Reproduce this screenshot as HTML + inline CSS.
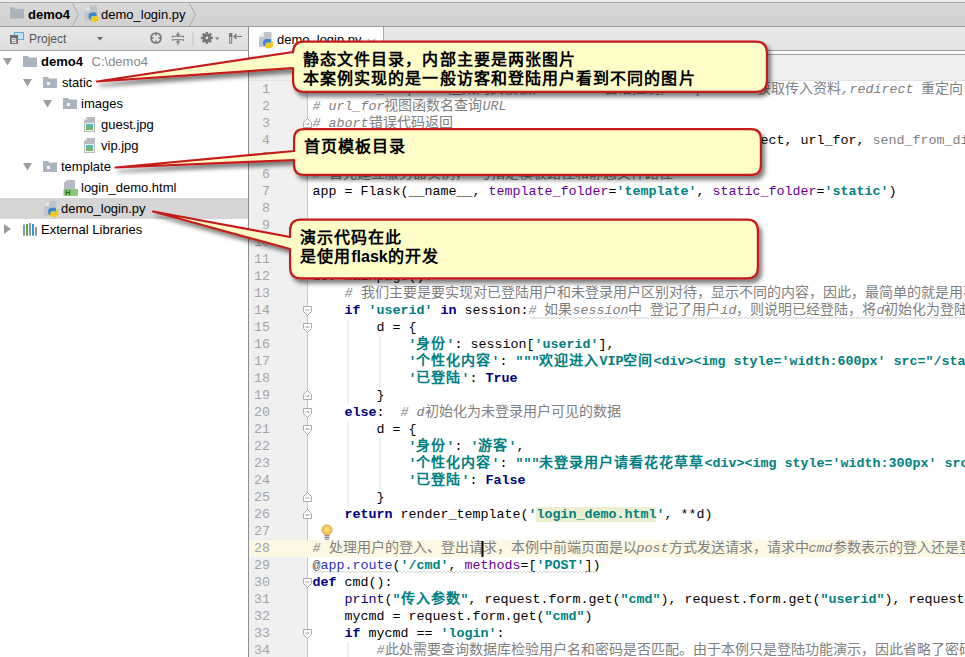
<!DOCTYPE html>
<html lang="zh-CN">
<head>
<meta charset="utf-8">
<style>
*{margin:0;padding:0;box-sizing:border-box}
html,body{width:965px;height:657px;overflow:hidden;background:#fff}
body{position:relative;font-family:"Liberation Sans",sans-serif;font-size:13px;color:#000}
.abs{position:absolute}
#topstrip{left:0;top:0;width:965px;height:3px;background:#ececec;border-bottom:1px solid #a9a9a9}
#nav{left:0;top:3px;width:965px;height:24px;background:linear-gradient(#d8d8d8,#d1d1d1);border-bottom:1px solid #9d9d9d}
#ltb{left:0;top:27px;width:248px;height:24px;background:linear-gradient(#e8e8e8,#dedede);border-bottom:1px solid #a8a8a8}
#tree{left:0;top:51px;width:248px;height:606px;background:#fff}
#divider{left:248px;top:27px;width:1px;height:630px;background:#8e8e8e}
#tabbar{left:249px;top:27px;width:716px;height:24px;background:linear-gradient(#e9e9e9,#e3e3e3);border-bottom:1px solid #a0a0a0}
#tab{left:249px;top:27px;width:135px;height:28px;background:#fff;border-right:1px solid #a8a8a8}
#tabline{left:249px;top:54px;width:716px;height:1px;background:#a0a0a0}
#strip{left:249px;top:55px;width:716px;height:26px;background:#efefef;border-bottom:1px solid #e2e2e2}
#gutter{left:249px;top:81px;width:58px;height:576px;background:#f0f0f0}
#gsep{left:307px;top:81px;width:1px;height:576px;background:#c9c9c9}
#code{left:308px;top:81px;width:657px;height:576px;background:#fff}
.row{position:absolute;left:0;height:21px;line-height:21px;white-space:nowrap}
.sel{background:#d5d5d5}
.ln{position:absolute;left:249px;width:21px;text-align:right;font-family:"Liberation Mono",monospace;font-size:13.33px;color:#a5a5a5;line-height:17px;height:17px}
.cl{position:absolute;left:312.5px;font-family:"Liberation Mono",monospace;font-size:13.333px;line-height:17px;height:17px;white-space:pre;color:#000}
.k{color:#000080;font-weight:bold}
.s{color:#008080;font-weight:bold}
.c{color:#808080;font-style:italic}
.p{color:#660099}
.bi{color:#000080}
.at{color:#555}
.g{color:#808080}
.d{color:#2d2db8}
.z{font-size:14px;font-style:normal}
.zb{font-size:14px;letter-spacing:1px}
.hl{background:#ecefd0}
.callout{position:absolute}
.ct{position:absolute;font-family:"Liberation Sans",sans-serif;font-weight:bold;font-size:16px;letter-spacing:1.07px;line-height:19px;color:#000;white-space:nowrap}
</style>
</head>
<body>
<div id="topstrip" class="abs"></div>
<div id="nav" class="abs"></div>
<div id="ltb" class="abs"></div>
<div id="tree" class="abs"></div>
<div id="divider" class="abs"></div>
<div id="tabbar" class="abs"></div>
<div id="tabline" class="abs"></div>
<div id="tab" class="abs"></div>
<div id="strip" class="abs"></div>
<div id="gutter" class="abs"></div>
<div id="gsep" class="abs"></div>
<div id="code" class="abs"></div>
<div class="row sel abs" style="top:198px;width:248px"></div>

<!-- NAV -->
<svg class="abs" style="left:0;top:0" width="965" height="657" viewBox="0 0 965 657">
<defs>
<g id="pyicon">
 <path d="M0,5 L5,0 L12.5,0 L12.5,15 L0,15 Z" fill="#bfc5cb"/>
 <path d="M0,5 L5,5 L5,0 Z" fill="#e6e8ea"/>
 <path d="M4,11 Q4,7 7.5,7 L11.5,7 Q12,7 12,8 L12,10.5 L8,10.5 Q7,10.5 7,11.5 L7,14.2 Q4,14.2 4,11 Z" fill="#3b88d0"/>
 <path d="M6.3,12.2 Q6.3,11.3 7.3,11.3 L11.3,11.3 Q12.3,11.3 12.3,10.3 L12.3,8.2 Q14.3,8.5 14.3,12.3 Q14.3,16.3 10.3,16.3 L7.3,16.3 Q6.3,16.3 6.3,15.3 Z" fill="#f2c81c"/>
</g>
<g id="folder">
 <path d="M0,0 L5,0 L6,1.5 L14,1.5 L14,10.5 L0,10.5 Z" fill="#a9b4be"/>
</g>
<g id="imgicon">
 <path d="M0,3 L3,0 L11,0 L11,15 L0,15 Z" fill="#b8bcc2"/>
 <path d="M0.5,3 L3,3 L3,0.5 Z" fill="#e4e4e4"/>
 <rect x="1" y="6" width="9" height="8" fill="#eef5f0"/>
 <rect x="2" y="7" width="7" height="3.5" fill="#4cb8c4"/>
 <path d="M2,10 L5,8.5 L9,10.5 L9,13 L2,13 Z" fill="#7ab468"/>
</g>
</defs>
<!-- nav folder -->
<rect x="10" y="9" width="14" height="9.5" fill="#aab4bd"/><rect x="10" y="7.5" width="5" height="2" fill="#aab4bd"/>
<path d="M72.5,3.5 L78.5,14.5 L72.5,26" fill="none" stroke="#a8a8a8" stroke-width="1"/>
<use href="#pyicon" x="84.5" y="5.5"/>
<path d="M189.5,3.5 L195.5,14.5 L189.5,26" fill="none" stroke="#a8a8a8" stroke-width="1"/>
<!-- toolbar icons -->
<rect x="10.5" y="35.5" width="7" height="8" fill="#6f6f6f"/>
<rect x="14.5" y="32.5" width="9" height="7" fill="#c5e2f3" stroke="#6aa7cf" stroke-width="1"/>
<rect x="10" y="35" width="8" height="9" fill="#707070"/>
<text x="11.6" y="42.6" font-family="Liberation Sans" font-size="7" font-weight="bold" fill="#eee">B</text>
<path d="M97,37 L103,37 L100,40.5 Z" fill="#6a6a6a"/>
<circle cx="156" cy="38" r="5" fill="none" stroke="#777" stroke-width="1.7"/>
<path d="M156,33 V35.6 M156,40.4 V43 M151,38 H153.6 M158.4,38 H161" stroke="#777" stroke-width="1.7"/>
<path d="M172.5,37.6 V36.3 H183.5 V37.6 M172.5,41 V39.7 H183.5 V41" fill="none" stroke="#777" stroke-width="1.1"/>
<path d="M178,32 V34.5" stroke="#777" stroke-width="1.1"/><path d="M175.8,34 L180.2,34 L178,36.4 Z" fill="#777"/>
<path d="M178,42 V45" stroke="#777" stroke-width="1.1"/><path d="M175.8,42.5 L180.2,42.5 L178,40 Z" fill="#777"/>
<rect x="192.5" y="32" width="1" height="14" fill="#c4c4c4"/>
<g transform="translate(206.9,37.9)" fill="#777">
 <circle r="4.3"/>
 <rect x="-1.2" y="-6" width="2.4" height="12"/><rect x="-6" y="-1.2" width="12" height="2.4"/>
 <rect x="-1.2" y="-6" width="2.4" height="12" transform="rotate(45)"/><rect x="-1.2" y="-6" width="2.4" height="12" transform="rotate(-45)"/>
 <circle r="1.3" fill="#e6e6e6"/>
</g>
<path d="M215,37.5 L219.5,37.5 L217.25,40 Z" fill="#777"/>
<rect x="229.7" y="33.5" width="2" height="9.6" fill="#eee" stroke="#777" stroke-width="1"/><rect x="229.2" y="33" width="3" height="4" fill="#777"/>
<path d="M234,36.5 H242 M236.5,34 L234,36.5 L236.5,39" fill="none" stroke="#777" stroke-width="1.2"/>
<!-- tree icons -->
<path d="M3,58 L12,58 L7.5,65.5 Z" fill="#9c9c9c"/>
<rect x="23" y="57.5" width="14" height="9.5" fill="#a9b4be"/><rect x="23" y="56" width="5.5" height="2" fill="#a9b4be"/>
<path d="M23,79 L32,79 L27.5,86.5 Z" fill="#9c9c9c"/>
<rect x="43" y="78.5" width="14" height="9.5" fill="#a9b4be"/><rect x="43" y="77" width="5.5" height="2" fill="#a9b4be"/><rect x="47" y="82" width="3" height="3" fill="#f4f6f8"/>
<path d="M43,100 L52,100 L47.5,107.5 Z" fill="#9c9c9c"/>
<rect x="63" y="99.5" width="14" height="9.5" fill="#a9b4be"/><rect x="63" y="98" width="5.5" height="2" fill="#a9b4be"/><rect x="67" y="103" width="3" height="3" fill="#f4f6f8"/>
<use href="#imgicon" x="84" y="117"/>
<use href="#imgicon" x="84" y="138"/>
<path d="M23,163 L32,163 L27.5,170.5 Z" fill="#9c9c9c"/>
<rect x="43" y="162.5" width="14" height="9.5" fill="#a9b4be"/><rect x="43" y="161" width="5.5" height="2" fill="#a9b4be"/><rect x="47" y="166" width="3" height="3" fill="#f4f6f8"/>
<path d="M64,183 L67,180 L75,180 L75,189 L64,189 Z" fill="#b8bcc2"/>
<rect x="63.5" y="189" width="14.5" height="7" fill="#8fc57a"/>
<text x="65" y="195.3" font-family="Liberation Sans" font-size="7.5" font-weight="bold" fill="#1d6b1d">H</text>
<use href="#pyicon" x="44" y="200.7"/>
<path d="M4,224 L11,229 L4,234 Z" fill="#9c9c9c"/>
<rect x="23" y="224.5" width="2" height="11.2" fill="#8a98a4"/>
<rect x="26" y="224" width="2" height="11.7" fill="#62a33f"/>
<rect x="29" y="223" width="2" height="12.7" fill="#8a98a4"/>
<rect x="32" y="224" width="2" height="11.7" fill="#2f9bd6"/>
<rect x="35" y="227" width="2" height="8.7" fill="#8a98a4"/>
<!-- tab icon -->
<use href="#pyicon" x="259" y="32"/>
<path d="M368,39 L371.5,42.5 L375,39" fill="none" stroke="#b4b4b4" stroke-width="1.3"/>
</svg>
<div class="abs" style="left:28px;top:7px;font-weight:bold;font-size:13px;line-height:16px">demo4</div>
<div class="abs" style="left:101px;top:7px;font-size:13px;line-height:16px">demo_login.py</div>

<!-- LEFT TOOLBAR -->
<div class="abs" style="left:29px;top:31px;font-size:12px;line-height:16px;color:#555">Project</div>

<!-- TREE -->
<div class="abs" style="left:41px;top:54px;line-height:16px"><b>demo4</b> <span style="color:#888;margin-left:5px">C:\demo4</span></div>
<div class="abs" style="left:62px;top:75px;line-height:16px">static</div>
<div class="abs" style="left:81px;top:96px;line-height:16px">images</div>
<div class="abs" style="left:101px;top:117px;line-height:16px">guest.jpg</div>
<div class="abs" style="left:101px;top:138px;line-height:16px">vip.jpg</div>
<div class="abs" style="left:61px;top:159px;line-height:16px">template</div>
<div class="abs" style="left:81px;top:180px;line-height:16px">login_demo.html</div>
<div class="abs" style="left:61px;top:201px;line-height:16px">demo_login.py</div>
<div class="abs" style="left:41px;top:222px;line-height:16px">External Libraries</div>

<!-- TAB -->
<div class="abs" style="left:277px;top:32px;line-height:16px">demo_login.py</div>

<!-- GUTTER NUMBERS & CODE LINES inserted below -->
<div class="abs" style="left:249px;top:540px;width:716px;height:17px;background:#fcf8e4"></div>
<div class="ln" style="top:81px">1</div>
<div class="ln" style="top:98px">2</div>
<div class="ln" style="top:115px">3</div>
<div class="ln" style="top:132px">4</div>
<div class="ln" style="top:149px">5</div>
<div class="ln" style="top:166px">6</div>
<div class="ln" style="top:183px">7</div>
<div class="ln" style="top:200px">8</div>
<div class="ln" style="top:217px">9</div>
<div class="ln" style="top:234px">10</div>
<div class="ln" style="top:251px">11</div>
<div class="ln" style="top:268px">12</div>
<div class="ln" style="top:285px">13</div>
<div class="ln" style="top:302px">14</div>
<div class="ln" style="top:319px">15</div>
<div class="ln" style="top:336px">16</div>
<div class="ln" style="top:353px">17</div>
<div class="ln" style="top:370px">18</div>
<div class="ln" style="top:387px">19</div>
<div class="ln" style="top:404px">20</div>
<div class="ln" style="top:421px">21</div>
<div class="ln" style="top:438px">22</div>
<div class="ln" style="top:455px">23</div>
<div class="ln" style="top:472px">24</div>
<div class="ln" style="top:489px">25</div>
<div class="ln" style="top:506px">26</div>
<div class="ln" style="top:523px">27</div>
<div class="ln" style="top:540px">28</div>
<div class="ln" style="top:557px">29</div>
<div class="ln" style="top:574px">30</div>
<div class="ln" style="top:591px">31</div>
<div class="ln" style="top:608px">32</div>
<div class="ln" style="top:625px">33</div>
<div class="ln" style="top:642px">34</div>
<div class="cl" style="top:81px"><span class="c"># render_template<span class="z">渲染网页模板</span>, session<span class="z">会话控制</span>, request </span><span style="display:inline-block;width:17px"></span><span class="c"><span class="z">获取传入资料</span>,redirect <span class="z">重定向</span></span></div>
<div class="cl" style="top:98px"><span class="c"># url_for<span class="z">视图函数名查询</span>URL</span></div>
<div class="cl" style="top:115px"><span class="c"># abort<span class="z">错误代码返回</span></span></div>
<div class="cl" style="top:132px"><span class="k">from</span> flask <span class="k">import</span> Flask, render_template, session, redirect, url_for, <span class="g">send_from_directory, abort</span></div>
<div class="cl" style="top:149px"></div>
<div class="cl" style="top:166px"><span class="c"># <span class="z">首先建立服务器实例，</span> <span class="z">与指定模板路径和静态文件路径</span></span></div>
<div class="cl" style="top:183px">app = Flask(__name__, <span class="p">template_folder</span>=<span class="s">&#x27;template&#x27;</span>, <span class="p">static_folder</span>=<span class="s">&#x27;static&#x27;</span>)</div>
<div class="cl" style="top:200px"></div>
<div class="cl" style="top:217px"></div>
<div class="cl" style="top:234px"><span class="at">@</span><span class="d">app.route</span>(&#x27;/&#x27;)</div>
<div class="cl" style="top:251px"></div>
<div class="cl" style="top:268px"><span class="k">def</span> mainpage():</div>
<div class="cl" style="top:285px">    <span class="c"># <span class="z">我们主要是要实现对已登陆用户和未登录用户区别对待，显示不同的内容，因此，最简单的就是用不同的变量</span></span></div>
<div class="cl" style="top:302px">    <span class="k">if</span> <span class="s">&#x27;userid&#x27;</span> <span class="k">in</span> session:<span class="c"># <span class="z">如果</span>session<span class="z">中</span> <span class="z">登记了用户</span>id<span class="z">，则说明已经登陆，将</span>d<span class="z">初始化为登陆</span></span></div>
<div class="cl" style="top:319px">        d = {</div>
<div class="cl" style="top:336px">            <span class="s">&#x27;<span class="zb">身份</span>&#x27;</span>: session[<span class="s">&#x27;userid&#x27;</span>],</div>
<div class="cl" style="top:353px">            <span class="s">&#x27;<span class="zb">个性化内容</span>&#x27;</span>: <span class="s">&quot;&quot;&quot;<span class="zb">欢迎进入</span>VIP<span class="zb">空间</span>&lt;div&gt;&lt;img style=&#x27;width:600px&#x27; src=&quot;/static/images/vip.jpg&quot;&gt;&lt;/div&gt;&quot;&quot;&quot;</span></div>
<div class="cl" style="top:370px">            <span class="s">&#x27;<span class="zb">已登陆</span>&#x27;</span>: <span class="k">True</span></div>
<div class="cl" style="top:387px">        }</div>
<div class="cl" style="top:404px">    <span class="k">else</span>:  <span class="c"># d<span class="z">初始化为未登录用户可见的数据</span></span></div>
<div class="cl" style="top:421px">        d = {</div>
<div class="cl" style="top:438px">            <span class="s">&#x27;<span class="zb">身份</span>&#x27;</span>: <span class="s">&#x27;<span class="zb">游客</span>&#x27;</span>,</div>
<div class="cl" style="top:455px">            <span class="s">&#x27;<span class="zb">个性化内容</span>&#x27;</span>: <span class="s">&quot;&quot;&quot;<span class="zb">未登录用户请看花花草草</span>&lt;div&gt;&lt;img style=&#x27;width:300px&#x27; src=&quot;/static/images/guest.jpg&quot;&gt;&lt;/div&gt;&quot;&quot;&quot;</span></div>
<div class="cl" style="top:472px">            <span class="s">&#x27;<span class="zb">已登陆</span>&#x27;</span>: <span class="k">False</span></div>
<div class="cl" style="top:489px">        }</div>
<div class="cl" style="top:506px">    <span class="k">return</span> render_template(<span class="s">&#x27;</span><span class="s hl">login_demo.html</span><span class="s">&#x27;</span>, **d)</div>
<div class="cl" style="top:523px"></div>
<div class="cl" style="top:540px"><span class="c"># <span class="z">处理用户的登入、登出请求，本例中前端页面是以</span>post<span class="z">方式发送请求，请求中</span>cmd<span class="z">参数表示的登入还是登出</span></span></div>
<div class="cl" style="top:557px"><span class="at">@</span><span class="d">app.route</span>(<span class="s">&#x27;/cmd&#x27;</span>, <span class="p">methods</span>=[<span class="s">&#x27;POST&#x27;</span>])</div>
<div class="cl" style="top:574px"><span class="k">def</span> cmd():</div>
<div class="cl" style="top:591px">    <span class="bi">print</span>(<span class="s">&quot;<span class="zb">传入参数</span>&quot;</span>, request.form.get(<span class="s">&quot;cmd&quot;</span>), request.form.get(<span class="s">&quot;userid&quot;</span>), request.form.get(<span class="s">&quot;pwd&quot;</span>))</div>
<div class="cl" style="top:608px">    mycmd = request.form.get(<span class="s">&quot;cmd&quot;</span>)</div>
<div class="cl" style="top:625px">    <span class="k">if</span> mycmd == <span class="s">&#x27;login&#x27;</span>:</div>
<div class="cl" style="top:642px">        <span class="c">#<span class="z">此处需要查询数据库检验用户名和密码是否匹配。由于本例只是登陆功能演示，因此省略了密码检验</span></span></div>
<svg class="abs" style="left:0;top:0" width="965" height="657" viewBox="0 0 965 657"><path d="M307.5,118.5 L311.5,122.5 V127.5 H303.5 V122.5 Z" fill="#fff" stroke="#ababab" stroke-width="1"/><path d="M305.5,124 H309.5" stroke="#9a9a9a" stroke-width="1"/><path d="M303.5,306.5 H311.5 V311.5 L307.5,315.5 L303.5,311.5 Z" fill="#fff" stroke="#ababab" stroke-width="1"/><path d="M305.5,310 H309.5" stroke="#9a9a9a" stroke-width="1"/><path d="M303.5,323.5 H311.5 V328.5 L307.5,332.5 L303.5,328.5 Z" fill="#fff" stroke="#ababab" stroke-width="1"/><path d="M305.5,327 H309.5" stroke="#9a9a9a" stroke-width="1"/><path d="M307.5,390.5 L311.5,394.5 V399.5 H303.5 V394.5 Z" fill="#fff" stroke="#ababab" stroke-width="1"/><path d="M305.5,396 H309.5" stroke="#9a9a9a" stroke-width="1"/><path d="M303.5,408.5 H311.5 V413.5 L307.5,417.5 L303.5,413.5 Z" fill="#fff" stroke="#ababab" stroke-width="1"/><path d="M305.5,412 H309.5" stroke="#9a9a9a" stroke-width="1"/><path d="M303.5,425.5 H311.5 V430.5 L307.5,434.5 L303.5,430.5 Z" fill="#fff" stroke="#ababab" stroke-width="1"/><path d="M305.5,429 H309.5" stroke="#9a9a9a" stroke-width="1"/><path d="M307.5,492.5 L311.5,496.5 V501.5 H303.5 V496.5 Z" fill="#fff" stroke="#ababab" stroke-width="1"/><path d="M305.5,498 H309.5" stroke="#9a9a9a" stroke-width="1"/><path d="M307.5,509.5 L311.5,513.5 V518.5 H303.5 V513.5 Z" fill="#fff" stroke="#ababab" stroke-width="1"/><path d="M305.5,515 H309.5" stroke="#9a9a9a" stroke-width="1"/><path d="M303.5,578.5 H311.5 V583.5 L307.5,587.5 L303.5,583.5 Z" fill="#fff" stroke="#ababab" stroke-width="1"/><path d="M305.5,582 H309.5" stroke="#9a9a9a" stroke-width="1"/><path d="M303.5,629.5 H311.5 V634.5 L307.5,638.5 L303.5,634.5 Z" fill="#fff" stroke="#ababab" stroke-width="1"/><path d="M305.5,633 H309.5" stroke="#9a9a9a" stroke-width="1"/><rect x="347.5" y="319" width="1" height="85" fill="#e2e2e2"/><rect x="379.5" y="336" width="1" height="51" fill="#e2e2e2"/><rect x="347.5" y="421" width="1" height="85" fill="#e2e2e2"/><rect x="379.5" y="438" width="1" height="51" fill="#e2e2e2"/><rect x="347.5" y="642" width="1" height="17" fill="#e2e2e2"/><circle cx="327" cy="530" r="5" fill="#f5c15a" stroke="#e7a13c" stroke-width="1"/><circle cx="327" cy="529.5" r="2.3" fill="#ffe27a"/><rect x="324.5" y="535" width="5" height="1.5" fill="#8d9094"/><rect x="324.5" y="537" width="5" height="1.5" fill="#8d9094"/><rect x="325" y="539" width="4" height="1" fill="#a7aaad"/><rect x="481.5" y="541" width="2" height="16" fill="#000"/><polyline points="530,317.2 532,318.8 534,317.2 536,318.8 538,317.2 540,318.8 542,317.2 544,318.8 546,317.2 548,318.8 550,317.2 552,318.8 554,317.2 556,318.8 558,317.2 560,318.8 562,317.2 564,318.8 566,317.2 568,318.8 570,317.2 572,318.8 574,317.2 576,318.8 578,317.2 580,318.8 582,317.2 584,318.8 586,317.2 588,318.8 590,317.2 592,318.8 594,317.2 596,318.8 598,317.2 600,318.8 602,317.2 604,318.8 606,317.2 608,318.8 610,317.2 612,318.8 614,317.2 616,318.8 618,317.2 620,318.8 622,317.2 624,318.8 626,317.2 628,318.8 630,317.2 632,318.8 634,317.2 636,318.8 638,317.2 640,318.8 642,317.2 644,318.8 646,317.2 648,318.8 650,317.2 652,318.8 654,317.2 656,318.8 658,317.2 660,318.8 662,317.2 664,318.8 666,317.2 668,318.8 670,317.2 672,318.8 674,317.2 676,318.8 678,317.2 680,318.8 682,317.2 684,318.8 686,317.2 688,318.8 690,317.2 692,318.8 694,317.2 696,318.8 698,317.2 700,318.8 702,317.2 704,318.8 706,317.2 708,318.8 710,317.2 712,318.8 714,317.2 716,318.8 718,317.2 720,318.8 722,317.2 724,318.8 726,317.2 728,318.8 730,317.2 732,318.8 734,317.2 736,318.8 738,317.2 740,318.8 742,317.2 744,318.8 746,317.2 748,318.8 750,317.2 752,318.8 754,317.2 756,318.8 758,317.2 760,318.8 762,317.2 764,318.8 766,317.2 768,318.8 770,317.2 772,318.8 774,317.2 776,318.8 778,317.2 780,318.8 782,317.2 784,318.8 786,317.2 788,318.8 790,317.2 792,318.8 794,317.2 796,318.8 798,317.2 800,318.8 802,317.2 804,318.8 806,317.2 808,318.8 810,317.2 812,318.8 814,317.2 816,318.8 818,317.2 820,318.8 822,317.2 824,318.8 826,317.2 828,318.8 830,317.2 832,318.8 834,317.2 836,318.8 838,317.2 840,318.8 842,317.2 844,318.8 846,317.2 848,318.8 850,317.2 852,318.8 854,317.2 856,318.8 858,317.2 860,318.8 862,317.2 864,318.8 866,317.2 868,318.8 870,317.2 872,318.8 874,317.2 876,318.8 878,317.2 880,318.8 882,317.2 884,318.8 886,317.2 888,318.8 890,317.2 892,318.8 894,317.2 896,318.8 898,317.2 900,318.8 902,317.2 904,318.8 906,317.2 908,318.8 910,317.2 912,318.8 914,317.2 916,318.8 918,317.2 920,318.8 922,317.2 924,318.8 926,317.2 928,318.8 930,317.2 932,318.8 934,317.2 936,318.8 938,317.2 940,318.8 942,317.2 944,318.8 946,317.2 948,318.8 950,317.2 952,318.8 954,317.2 956,318.8 958,317.2 960,318.8 962,317.2 964,318.8" fill="none" stroke="#cfcfcf" stroke-width="0.9"/><polyline points="312,571.2 314,572.8 316,571.2 318,572.8 320,571.2 322,572.8 324,571.2 326,572.8 328,571.2 330,572.8 332,571.2 334,572.8 336,571.2 338,572.8 340,571.2 342,572.8 344,571.2 346,572.8 348,571.2 350,572.8 352,571.2 354,572.8 356,571.2 358,572.8 360,571.2 362,572.8 364,571.2 366,572.8 368,571.2 370,572.8 372,571.2 374,572.8 376,571.2 378,572.8 380,571.2 382,572.8 384,571.2 386,572.8 388,571.2 390,572.8 392,571.2 394,572.8 396,571.2 398,572.8 400,571.2 402,572.8 404,571.2 406,572.8 408,571.2 410,572.8 412,571.2 414,572.8 416,571.2 418,572.8 420,571.2 422,572.8 424,571.2 426,572.8 428,571.2 430,572.8 432,571.2 434,572.8 436,571.2 438,572.8 440,571.2 442,572.8 444,571.2 446,572.8 448,571.2 450,572.8 452,571.2 454,572.8 456,571.2 458,572.8 460,571.2 462,572.8 464,571.2 466,572.8 468,571.2 470,572.8 472,571.2 474,572.8 476,571.2 478,572.8 480,571.2 482,572.8 484,571.2 486,572.8 488,571.2 490,572.8 492,571.2 494,572.8 496,571.2 498,572.8 500,571.2 502,572.8 504,571.2 506,572.8 508,571.2 510,572.8 512,571.2 514,572.8 516,571.2 518,572.8 520,571.2 522,572.8 524,571.2 526,572.8 528,571.2 530,572.8 532,571.2 534,572.8 536,571.2 538,572.8 540,571.2 542,572.8 544,571.2 546,572.8 548,571.2 550,572.8 552,571.2 554,572.8 556,571.2 558,572.8 560,571.2 562,572.8 564,571.2 566,572.8 568,571.2 570,572.8 572,571.2 574,572.8 576,571.2 578,572.8 580,571.2 582,572.8 584,571.2 586,572.8 588,571.2 590,572.8 592,571.2 594,572.8 596,571.2 598,572.8" fill="none" stroke="#cfcfcf" stroke-width="0.9"/></svg>
<svg class="abs" style="left:0;top:0" width="965" height="657" viewBox="0 0 965 657">
<defs><filter id="sh" x="-10%" y="-30%" width="130%" height="160%"><feGaussianBlur in="SourceAlpha" stdDeviation="2.2"/><feOffset dx="3" dy="3.5"/><feComponentTransfer><feFuncA type="linear" slope="0.5"/></feComponentTransfer><feMerge><feMergeNode/><feMergeNode in="SourceGraphic"/></feMerge></filter></defs>
<g filter="url(#sh)" fill="#fefdc8" stroke="#c41c1a" stroke-width="2.2" stroke-linejoin="round">
<path d="M97,81.5 L293.1,68 L293.1,81.0 Q293.1,91.9 304.0,91.9 L756.0,91.9 Q766.9,91.9 766.9,81.0 L766.9,52.5 Q766.9,41.6 756.0,41.6 L304.0,41.6 Q293.1,41.6 293.1,52.5 L293.1,52 Z"/>
<path d="M115.5,167.5 L294.1,160 L294.1,165.0 Q294.1,174.9 304.0,174.9 L751.0,174.9 Q760.9,174.9 760.9,165.0 L760.9,139.0 Q760.9,129.1 751.0,129.1 L304.0,129.1 Q294.1,129.1 294.1,139.0 L294.1,151 Z"/>
<path d="M153,211.5 L290.1,249 L290.1,267.5 Q290.1,278.4 301.0,278.4 L747.0,278.4 Q757.9,278.4 757.9,267.5 L757.9,230.5 Q757.9,219.6 747.0,219.6 L301.0,219.6 Q290.1,219.6 290.1,230.5 L290.1,237 Z"/>
</g>
</svg>
<div class="ct" style="left:303px;top:49.5px">静态文件目录，内部主要是两张图片<br>本案例实现的是一般访客和登陆用户看到不同的图片</div>
<div class="ct" style="left:304px;top:136.5px">首页模板目录</div>
<div class="ct" style="left:300px;top:228px">演示代码在此<br>是使用<span style="letter-spacing:0">flask</span>的开发</div>


</body>
</html>
